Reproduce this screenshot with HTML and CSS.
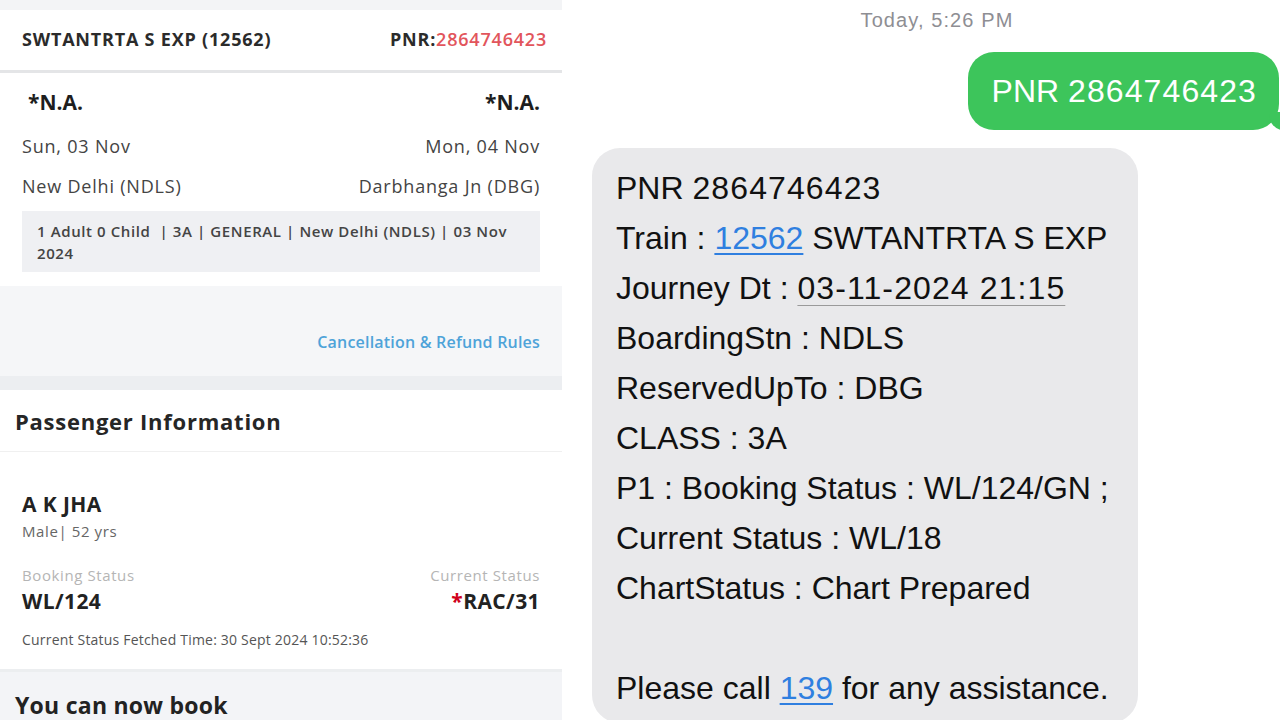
FILE: index.html
```html
<!DOCTYPE html>
<html>
<head>
<meta charset="utf-8">
<link rel="stylesheet" href="styles.css">
</head>
<body>
<div class="page">
  <section class="left">
    <div class="topstrip"></div>
    <div class="header">
      <span class="train">SWTANTRTA S EXP (12562)</span>
      <span class="pnr">PNR:<span class="pnr-num">2864746423</span></span>
    </div>
    <div class="journey">
      <div class="row na"><span class="na-l">*N.A.</span><span>*N.A.</span></div>
      <div class="row date"><span>Sun, 03 Nov</span><span>Mon, 04 Nov</span></div>
      <div class="row stn"><span>New Delhi (NDLS)</span><span>Darbhanga Jn (DBG)</span></div>
      <div class="infobox">1 Adult 0 Child &nbsp;| 3A | GENERAL | New Delhi (NDLS) | 03 Nov 2024</div>
    </div>
    <div class="rules">
      <span class="rules-link">Cancellation &amp; Refund Rules</span>
    </div>
    <div class="band"></div>
    <div class="pi-title">Passenger Information</div>
    <div class="passenger">
      <div class="pname">A K JHA</div>
      <div class="pmeta">Male| 52 yrs</div>
      <div class="row labels"><span>Booking Status</span><span>Current Status</span></div>
      <div class="row status"><span>WL/124</span><span><span class="star">*</span>RAC/31</span></div>
      <div class="fetched">Current Status Fetched Time: 30 Sept 2024 10:52:36</div>
    </div>
    <div class="book">You can now book</div>
  </section>
  <section class="right">
    <div class="stamp">Today, 5:26 PM</div>
    <div class="out-row">
      <div class="bubble-out">PNR <span class="num">2864746423</span></div>
    </div>
    <div class="bubble-in">
      <div>PNR <span class="num">2864746423</span></div>
      <div>Train : <span class="link">12562</span> SWTANTRTA S EXP</div>
      <div>Journey Dt : <span class="dt num">03-11-2024 21:15</span></div>
      <div>BoardingStn : NDLS</div>
      <div>ReservedUpTo : DBG</div>
      <div>CLASS : 3A</div>
      <div>P1 : Booking Status : WL/124/GN ;</div>
      <div>Current Status : WL/18</div>
      <div>ChartStatus : Chart Prepared</div>
      <div class="blank">&nbsp;</div>
      <div>Please call <span class="link">139</span> for any assistance.</div>
    </div>
  </section>
</div>
</body>
</html>
```

FILE: styles.css
```css
* { box-sizing: border-box; }
html, body { margin: 0; padding: 0; background: #ffffff; }
body { width: 1280px; height: 720px; overflow: hidden; }

.page { display: flex; height: 720px; }

.left {
  width: 562px;
  flex: none;
  font-family: "Open Sans", "Noto Sans", sans-serif;
  color: #222;
  display: flex;
  flex-direction: column;
}
.topstrip { height: 10px; flex: none; background: #f3f4f6; }
.header {
  height: 63px;
  flex: none;
  display: flex;
  justify-content: space-between;
  align-items: center;
  padding: 0 15px 3px 22px;
  border-bottom: 3px solid #e4e5e7;
  font-weight: 700;
  font-size: 18px;
  letter-spacing: 0.8px;
  color: #2b2b2b;
}
.pnr-num { color: #e2555c; font-weight: 600; }

.journey { padding: 0 22px; flex: none; }
.row { display: flex; justify-content: space-between; align-items: center; }
.na { height: 54px; font-size: 21px; font-weight: 700; color: #1e1e1e; padding-top: 4px; }
.na-l { padding-left: 6px; }
.date, .stn { font-size: 18px; letter-spacing: 0.8px; color: #444; }
.date { height: 38px; }
.stn { height: 42px; }
.infobox {
  margin-top: 4px;
  background: #eff0f3;
  padding: 9px 15px 8px;
  font-size: 15px;
  letter-spacing: 0.6px;
  font-weight: 600;
  line-height: 22px;
  color: #444;
  height: 61px;
}
.rules {
  margin-top: 14px;
  height: 90px;
  flex: none;
  background: #f5f6f8;
  display: flex;
  justify-content: flex-end;
  align-items: flex-end;
  padding: 0 22px 23px;
}
.rules-link { color: #4ea3d9; font-weight: 600; font-size: 16px; letter-spacing: 0.2px; }
.band { height: 14px; flex: none; background: #eceef1; }
.pi-title {
  height: 62px;
  flex: none;
  display: flex;
  align-items: center;
  padding-left: 15px;
  font-size: 22px;
  letter-spacing: 0.75px;
  font-weight: 700;
  color: #262626;
  border-bottom: 1px solid #f0f0f0;
}
.passenger { padding: 38px 22px 0; height: 220px; flex: none; border-bottom: 3px solid #eceef0; }
.pname { font-size: 21px; letter-spacing: 0.4px; font-weight: 700; color: #222; line-height: 28px; }
.pmeta { margin-top: 2px; font-size: 15px; letter-spacing: 0.6px; color: #666; line-height: 22px; }
.labels { margin-top: 23px; font-size: 15px; letter-spacing: 0.6px; color: #b5b5b5; line-height: 20px; }
.status { margin-top: 1px; font-size: 21px; letter-spacing: 0.4px; font-weight: 700; color: #222; line-height: 30px; }
.star { color: #d0021b; }
.fetched { margin-top: 14px; font-size: 14px; letter-spacing: 0.2px; color: #555; line-height: 20px; }
.book {
  flex: 1;
  background: #f3f4f7;
  padding: 18px 15px 0;
  font-size: 23px;
  letter-spacing: 0.25px;
  line-height: 31px;
  font-weight: 700;
  color: #222;
}

.right {
  flex: 1;
  font-family: "Liberation Sans", Arial, sans-serif;
  padding-left: 30px;
  display: flex;
  flex-direction: column;
  overflow: hidden;
}
.stamp {
  height: 40px;
  line-height: 40px;
  text-align: center;
  font-size: 20px;
  letter-spacing: 1.1px;
  color: #8e8e93;
  width: 690px;
}
.out-row { display: flex; justify-content: flex-end; margin-top: 12px; }
.bubble-out {
  position: relative;
  background: #3dc55b;
  color: #fff;
  font-size: 32px;
  height: 78px;
  line-height: 78px;
  padding: 0 22px 0 24px;
  border-radius: 26px;
  margin-right: 1px;
}
.bubble-out::after {
  content: "";
  position: absolute;
  right: -6px;
  bottom: 0;
  width: 16px;
  height: 18px;
  background: #3dc55b;
  border-bottom-left-radius: 14px 16px;
}
.num { letter-spacing: 1.1px; }
.bubble-in {
  margin-top: 18px;
  width: 546px;
  background: #e9e9eb;
  border-radius: 28px;
  padding: 15px 20px 10px 24px;
  font-size: 32px;
  line-height: 50px;
  color: #111;
}
.link { color: #2f7fe0; text-decoration: underline; text-decoration-thickness: 2px; text-underline-offset: 4px; }
.dt { text-decoration: underline; text-decoration-color: #9a9a9a; text-decoration-thickness: 1px; text-underline-offset: 6px; }
```
